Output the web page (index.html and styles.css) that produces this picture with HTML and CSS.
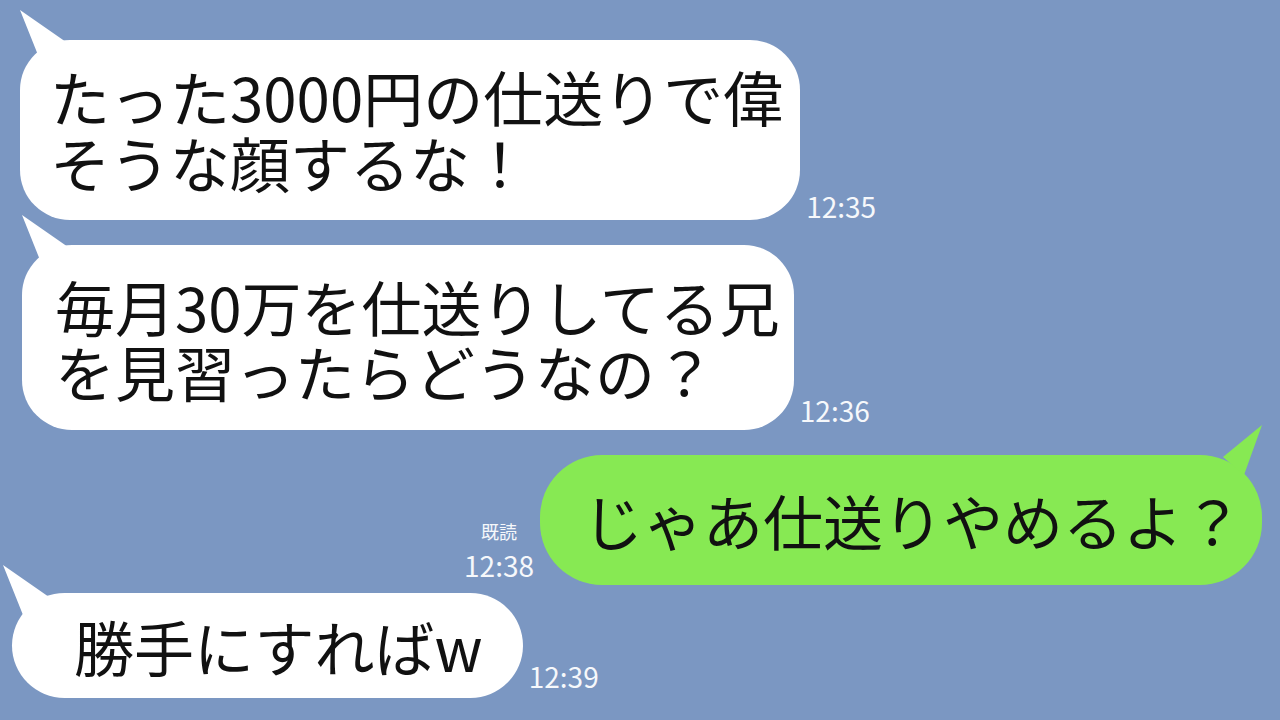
FILE: index.html
```html
<!DOCTYPE html>
<html lang="ja">
<head>
<meta charset="utf-8">
<title>トーク</title>
<link rel="stylesheet" href="styles.css">
</head>
<body>
<main class="talk">
  <div class="row row-in row-1">
    <div class="bubble bubble-in b-1">たった3000円の仕送りで偉<br>そうな顔するな！</div>
    <span class="time">12:35</span>
  </div>
  <div class="row row-in row-2">
    <div class="bubble bubble-in b-2">毎月30万を仕送りしてる兄<br>を見習ったらどうなの？</div>
    <span class="time time-lift">12:36</span>
  </div>
  <div class="row row-out row-3">
    <div class="meta">
      <span class="read">既読</span>
      <span class="time">12:38</span>
    </div>
    <div class="bubble bubble-out">じゃあ仕送りやめるよ？</div>
  </div>
  <div class="row row-in row-4">
    <div class="bubble bubble-in b-4">勝手にすればw</div>
    <span class="time time-lift2">12:39</span>
  </div>
</main>
</body>
</html>
```

FILE: styles.css
```css
html, body {
  margin: 0;
  padding: 0;
}

body {
  width: 1280px;
  height: 720px;
  overflow: hidden;
  background: #7b97c2;
  font-family: "Noto Sans CJK JP", "Noto Sans", sans-serif;
  color: #111;
}

.talk {
  display: flex;
  flex-direction: column;
}

.row {
  display: flex;
  align-items: flex-end;
  gap: 6px;
}

.row-out {
  justify-content: flex-end;
  padding-right: 18px;
}

.row-1 { margin: 40px 0 0 20px; }
.row-2 { margin: 25px 0 0 22px; }
.row-3 { margin-top: 25px; }
.row-4 { margin: 8px 0 0 12px; }

/* speech bubbles */
.bubble {
  position: relative;
  font-size: 60px;
  white-space: nowrap;
}

.bubble::before {
  content: "";
  position: absolute;
  top: -30px;
  width: 46px;
  height: 50px;
  background: inherit;
}

.bubble-in {
  background: #ffffff;
  border-radius: 50px;
  line-height: 66px;
}

.bubble-in::before {
  left: 0;
  clip-path: polygon(0 0, 46px 32px, 20px 50px);
}

.b-1 {
  padding: 23px 17px 25px 30px;
}

.b-2 {
  line-height: 65px;
  padding: 28px 14px 27px 33px;
}

.b-4 {
  line-height: 65px;
  padding: 20px 40px 20px 62px;
  border-radius: 53px;
}

.b-4::before {
  left: -9px;
  top: -28px;
}

.bubble-out {
  background: #87e953;
  border-radius: 62px;
  height: 130px;
  line-height: 130px;
  padding: 0 19px 0 43px;
}

.bubble-out::before {
  right: 0;
  clip-path: polygon(100% 0, 7px 32px, 28px 50px);
}

/* timestamps and read marks */
.time {
  font-size: 28px;
  line-height: 28px;
  color: #f6f8fb;
  white-space: nowrap;
}

.time-lift { margin-bottom: 6px; }
.time-lift2 { margin-bottom: 8px; }

.meta {
  display: flex;
  flex-direction: column;
  align-items: center;
  gap: 10px;
  margin-bottom: 6px;
}

.read {
  font-size: 18px;
  line-height: 20px;
  color: #f6f8fb;
}
```
